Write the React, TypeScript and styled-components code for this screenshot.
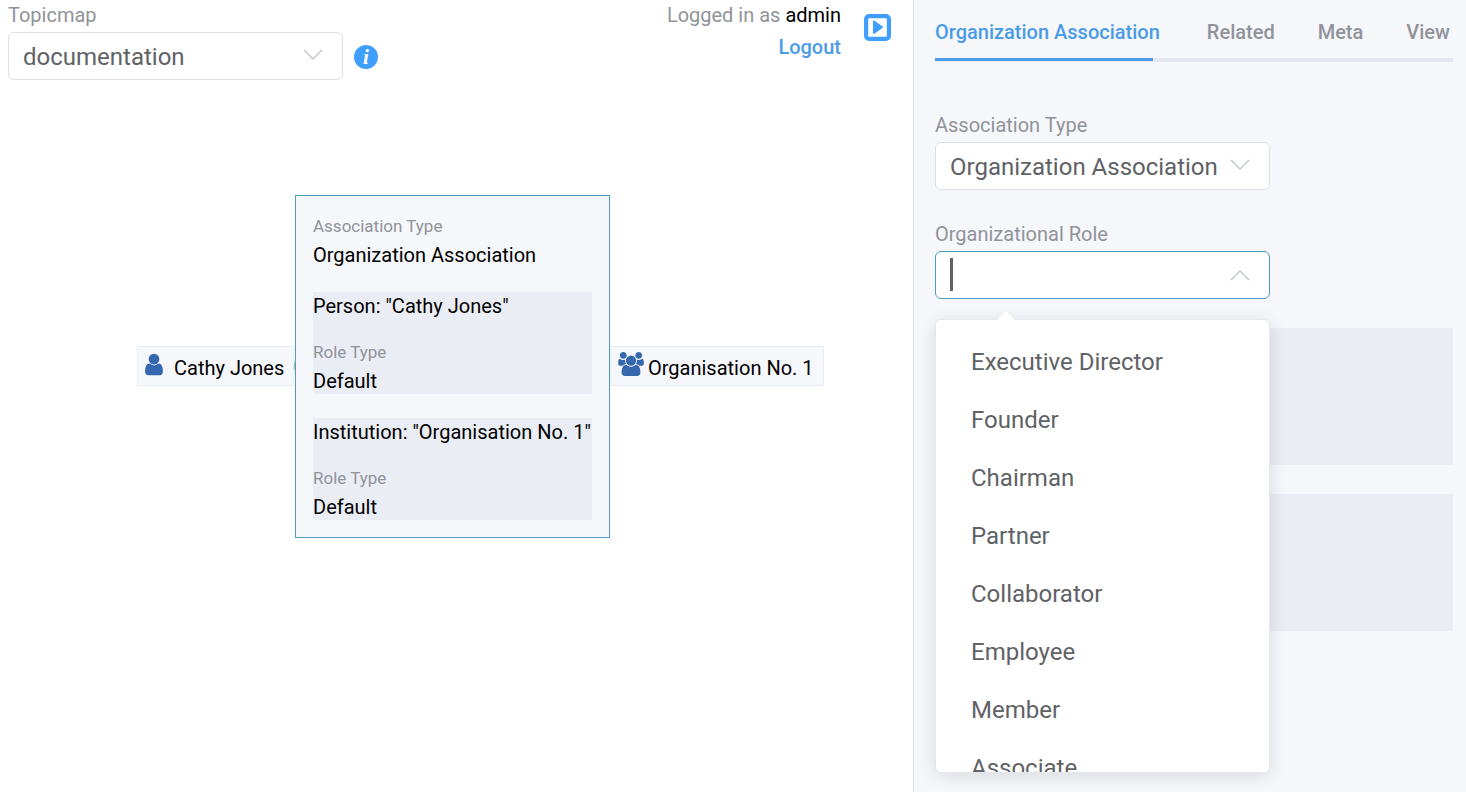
import React from "react";
import styled, { createGlobalStyle } from "styled-components";

const GlobalStyle = createGlobalStyle`
  *, *::before, *::after { box-sizing: border-box; }
  body {
    margin: 0;
    background: #fff;
    color: #000;
    font-family: Roboto, "Liberation Sans", sans-serif;
    font-size: 20px;
    line-height: 24px;
  }
  button, input, select { font: inherit; }
`;

const Page = styled.div`
  display: grid;
  grid-template-columns: minmax(0, 913fr) minmax(0, 553fr);
  min-height: 100vh;
`;

const Workspace = styled.main`
  position: relative;
  overflow: hidden;
`;

const Toolbar = styled.header`
  display: flex;
  justify-content: space-between;
  padding: 3px 22px 0 8px;
`;

const TopicmapField = styled.div`
  display: flex;
  flex-direction: column;
  gap: 5px;
`;

const TopicmapRow = styled.div`
  display: flex;
  align-items: center;
  gap: 11px;
`;

const Label = styled.label`
  color: #909399;
  line-height: 24px;
`;

const ControlBox = styled.div`
  position: relative;
  width: 335px;
  height: 48px;
`;

const Select = styled.select`
  appearance: none;
  width: 100%;
  height: 100%;
  padding: 2px 40px 0 14px;
  border: 1px solid #dcdfe6;
  border-radius: 6px;
  background: #fff;
  color: #606266;
  font-size: 24px;
  line-height: 32px;
`;

const ComboInput = styled.input`
  width: 100%;
  height: 100%;
  padding: 0 44px 0 14px;
  border: 1px solid #4b9bbd;
  border-radius: 6px;
  outline: none;
  background: #fff;
  color: #606266;
  font-size: 24px;
`;

const Chevron = styled.svg`
  position: absolute;
  top: 16px;
  right: 20px;
  width: 20px;
  height: 14px;
  fill: none;
  stroke: #c0c4cc;
  stroke-width: 1.4;
  pointer-events: none;
`;

const TextCursor = styled.span`
  position: absolute;
  top: 7px;
  left: 15px;
  width: 3px;
  height: 33px;
  background: #606266;
`;

const InfoButton = styled.button`
  width: 24px;
  height: 24px;
  margin-top: 2px;
  padding: 0;
  border: 0;
  border-radius: 50%;
  background: #409eff;
  color: #fff;
  font: italic bold 21px/22px "Liberation Serif", serif;
`;

const Session = styled.div`
  display: flex;
  gap: 23px;
`;

const Account = styled.div`
  display: flex;
  flex-direction: column;
  align-items: flex-end;
  gap: 8px;
  color: #909399;
`;

const UserName = styled.span`
  color: #000;
`;

const LogoutLink = styled.a`
  color: #4b9be6;
  font-weight: 500;
  text-decoration: none;
`;

const PanelToggle = styled.button`
  display: block;
  width: 27px;
  height: 27px;
  margin-top: 11px;
  padding: 0;
  border: 0;
  background: none;
  svg { display: block; }
`;

const TopicNode = styled.div<{ $x: number; $gap: number }>`
  position: absolute;
  left: ${(p) => p.$x}px;
  top: 346px;
  display: flex;
  align-items: center;
  gap: ${(p) => p.$gap}px;
  height: 40px;
  padding: 0 9px 0 7px;
  border: 1px solid #e9edf5;
  background: #f5f7fb;
  white-space: nowrap;
  svg {
    display: block;
    margin-bottom: 4px;
    fill: #3567ae;
  }
  span { padding-top: 4px; }
`;

const EdgeEnd = styled.i`
  position: absolute;
  left: 294px;
  top: 362px;
  width: 2px;
  height: 8px;
  background: #a3c096;
`;

const DetailCard = styled.section`
  position: absolute;
  left: 295px;
  top: 195px;
  display: flex;
  flex-direction: column;
  gap: 24px;
  min-width: 315px;
  padding: 17px;
  border: 1px solid #4b9bbd;
  background: #f5f7fb;
  white-space: nowrap;
`;

const Property = styled.div`
  display: flex;
  flex-direction: column;
  gap: 2px;
`;

const PropertyName = styled.div`
  color: #909399;
  font-size: 17px;
  line-height: 26px;
`;

const PropertyValue = styled.div`
  height: 27px;
  line-height: 28px;
`;

const RoleBlock = styled.div`
  display: flex;
  flex-direction: column;
  gap: 20px;
  background: #ebedf5;
`;

const Sidebar = styled.aside`
  padding: 14px 13px 0 21px;
  border-left: 1px solid #dcdfe6;
  background: #f5f7fb;
`;

const Tabs = styled.div`
  position: relative;
  display: flex;
  gap: 43px;
  height: 48px;
  border-bottom: 4px solid #e4e7ed;
`;

const Tab = styled.button<{ $active?: boolean }>`
  height: 36px;
  padding: ${(p) => (p.$active ? "0 4px 0 0" : "0")};
  border: 0;
  background: none;
  color: ${(p) => (p.$active ? "#4b9be6" : "#909399")};
  font-weight: 500;
  white-space: nowrap;
`;

const ActiveBar = styled.span`
  position: absolute;
  left: 0;
  bottom: -3px;
  width: 218px;
  height: 3px;
  background: #4b9be6;
`;

const Form = styled.form`
  display: flex;
  flex-direction: column;
  gap: 29px;
  padding-top: 51px;
`;

const Field = styled.div`
  display: flex;
  flex-direction: column;
  gap: 5px;
`;

const Fields = styled.div`
  display: flex;
  flex-direction: column;
  gap: 32px;
`;

const RolePlaceholder = styled.div`
  height: 137px;
  background: #ebedf5;
`;

const Popup = styled.div`
  position: absolute;
  z-index: 1;
  top: 68px;
  left: 0;
  width: 100%;
  border: 1px solid #e4e7ed;
  border-radius: 6px;
  background: #fff;
  box-shadow: 0 3px 18px rgba(0, 0, 0, 0.12);
  &::before {
    content: "";
    position: absolute;
    top: -9px;
    left: 61px;
    border: 9px solid transparent;
    border-top: 0;
    border-bottom-color: #fff;
  }
`;

const Options = styled.ul`
  height: 452px;
  margin: 0;
  padding: 13px 0 0;
  overflow: hidden;
  list-style: none;
`;

const Option = styled.li`
  padding: 0 35px;
  color: #606266;
  font-size: 24px;
  line-height: 58px;
`;

const roles = [
  "Executive Director",
  "Founder",
  "Chairman",
  "Partner",
  "Collaborator",
  "Employee",
  "Member",
  "Associate",
];

const players = [
  { type: "Person", name: "Cathy Jones" },
  { type: "Institution", name: "Organisation No. 1" },
];

const ChevronIcon = ({ up = false }: { up?: boolean }) => (
  <Chevron viewBox="0 0 20 14" aria-hidden="true">
    <path d={up ? "M1 13 10 4l9 9" : "M1 2l9 9 9-9"} />
  </Chevron>
);

const UserIcon = () => (
  <svg width="18" height="25" viewBox="0 0 1280 1792" aria-hidden="true">
    <path d="M1280 1399q0 109-62.5 187t-150.5 78h-854q-88 0-150.5-78t-62.5-187q0-85 8.5-160.5t31.5-152 58.5-131 94-89 134.5-34.5q131 128 313 128t313-128q76 0 134.5 34.5t94 89 58.5 131 31.5 152 8.5 160.5zm-256-887q0 159-112.5 271.5t-271.5 112.5-271.5-112.5-112.5-271.5 112.5-271.5 271.5-112.5 271.5 112.5 112.5 271.5z" />
  </svg>
);

const UsersIcon = () => (
  <svg width="26" height="24" viewBox="0 0 1920 1792" aria-hidden="true">
    <path d="M593 896q-162 5-265 128h-134q-82 0-138-40.5t-56-118.5q0-353 124-353 6 0 43.5 21t97.5 42.5 119 21.5q67 0 133-23-5 37-5 66 0 139 81 256zm1071 637q0 120-73 189.5t-194 69.5h-874q-121 0-194-69.5t-73-189.5q0-53 3.5-103.5t14-109 26.5-108.5 43-97.5 62-81 85.5-53.5 111.5-20q10 0 43 21.5t73 48 107 48 135 21.5 135-21.5 107-48 73-48 43-21.5q61 0 111.5 20t85.5 53.5 62 81 43 97.5 26.5 108.5 14 109 3.5 103.5zm-1024-1277q0 106-75 181t-181 75-181-75-75-181 75-181 181-75 181 75 75 181zm704 384q0 159-112.5 271.5t-271.5 112.5-271.5-112.5-112.5-271.5 112.5-271.5 271.5-112.5 271.5 112.5 112.5 271.5zm576 225q0 78-56 118.5t-138 40.5h-134q-103-123-265-128 81-117 81-256 0-29-5-66 66 23 133 23 59 0 119-21.5t97.5-42.5 43.5-21q124 0 124 353zm-128-609q0 106-75 181t-181 75-181-75-75-181 75-181 181-75 181 75 75 181z" />
  </svg>
);

const PlayIcon = () => (
  <svg width="27" height="27" viewBox="0 0 27 27" aria-hidden="true">
    <rect x="2.1" y="2.1" width="22.8" height="22.8" rx="3" fill="none" stroke="#409eff" strokeWidth="4.2" />
    <path d="M9 7.5q0-1.5 1.4-.8l8 5.6q1.2.9 0 1.8l-8 5.6q-1.4.7-1.4-.8z" fill="#409eff" />
  </svg>
);

export default function App() {
  return (
    <Page>
      <GlobalStyle />
      <Workspace>
        <Toolbar>
          <TopicmapField>
            <Label htmlFor="topicmap">Topicmap</Label>
            <TopicmapRow>
              <ControlBox>
                <Select id="topicmap">
                  <option>documentation</option>
                </Select>
                <ChevronIcon />
              </ControlBox>
              <InfoButton type="button" aria-label="Topicmap info">i</InfoButton>
            </TopicmapRow>
          </TopicmapField>
          <Session>
            <Account>
              <div>Logged in as <UserName>admin</UserName></div>
              <LogoutLink href="#logout">Logout</LogoutLink>
            </Account>
            <PanelToggle type="button" aria-label="Toggle detail panel">
              <PlayIcon />
            </PanelToggle>
          </Session>
        </Toolbar>

        <TopicNode $x={137} $gap={11}>
          <UserIcon />
          <span>Cathy Jones</span>
        </TopicNode>
        <TopicNode $x={610} $gap={4}>
          <UsersIcon />
          <span>Organisation No. 1</span>
        </TopicNode>
        <EdgeEnd />
        <DetailCard>
          <Property>
            <PropertyName>Association Type</PropertyName>
            <PropertyValue>Organization Association</PropertyValue>
          </Property>
          {players.map((p) => (
            <RoleBlock key={p.type}>
              <PropertyValue>{`${p.type}: "${p.name}"`}</PropertyValue>
              <Property>
                <PropertyName>Role Type</PropertyName>
                <PropertyValue>Default</PropertyValue>
              </Property>
            </RoleBlock>
          ))}
        </DetailCard>
      </Workspace>

      <Sidebar>
        <Tabs role="tablist">
          <Tab type="button" role="tab" aria-selected="true" $active>Organization Association</Tab>
          <Tab type="button" role="tab">Related</Tab>
          <Tab type="button" role="tab">Meta</Tab>
          <Tab type="button" role="tab">View</Tab>
          <ActiveBar />
        </Tabs>
        <Form>
          <Fields>
            <Field>
              <Label htmlFor="assoc-type">Association Type</Label>
              <ControlBox>
                <Select id="assoc-type">
                  <option>Organization Association</option>
                </Select>
                <ChevronIcon />
              </ControlBox>
            </Field>
            <Field>
              <Label htmlFor="org-role">Organizational Role</Label>
              <ControlBox>
                <ComboInput id="org-role" type="text" role="combobox" aria-expanded="true" aria-controls="org-role-options" />
                <TextCursor />
                <ChevronIcon up />
                <Popup>
                  <Options id="org-role-options" role="listbox">
                    {roles.map((role) => (
                      <Option key={role} role="option">{role}</Option>
                    ))}
                  </Options>
                </Popup>
              </ControlBox>
            </Field>
          </Fields>
          <RolePlaceholder />
          <RolePlaceholder />
        </Form>
      </Sidebar>
    </Page>
  );
}
